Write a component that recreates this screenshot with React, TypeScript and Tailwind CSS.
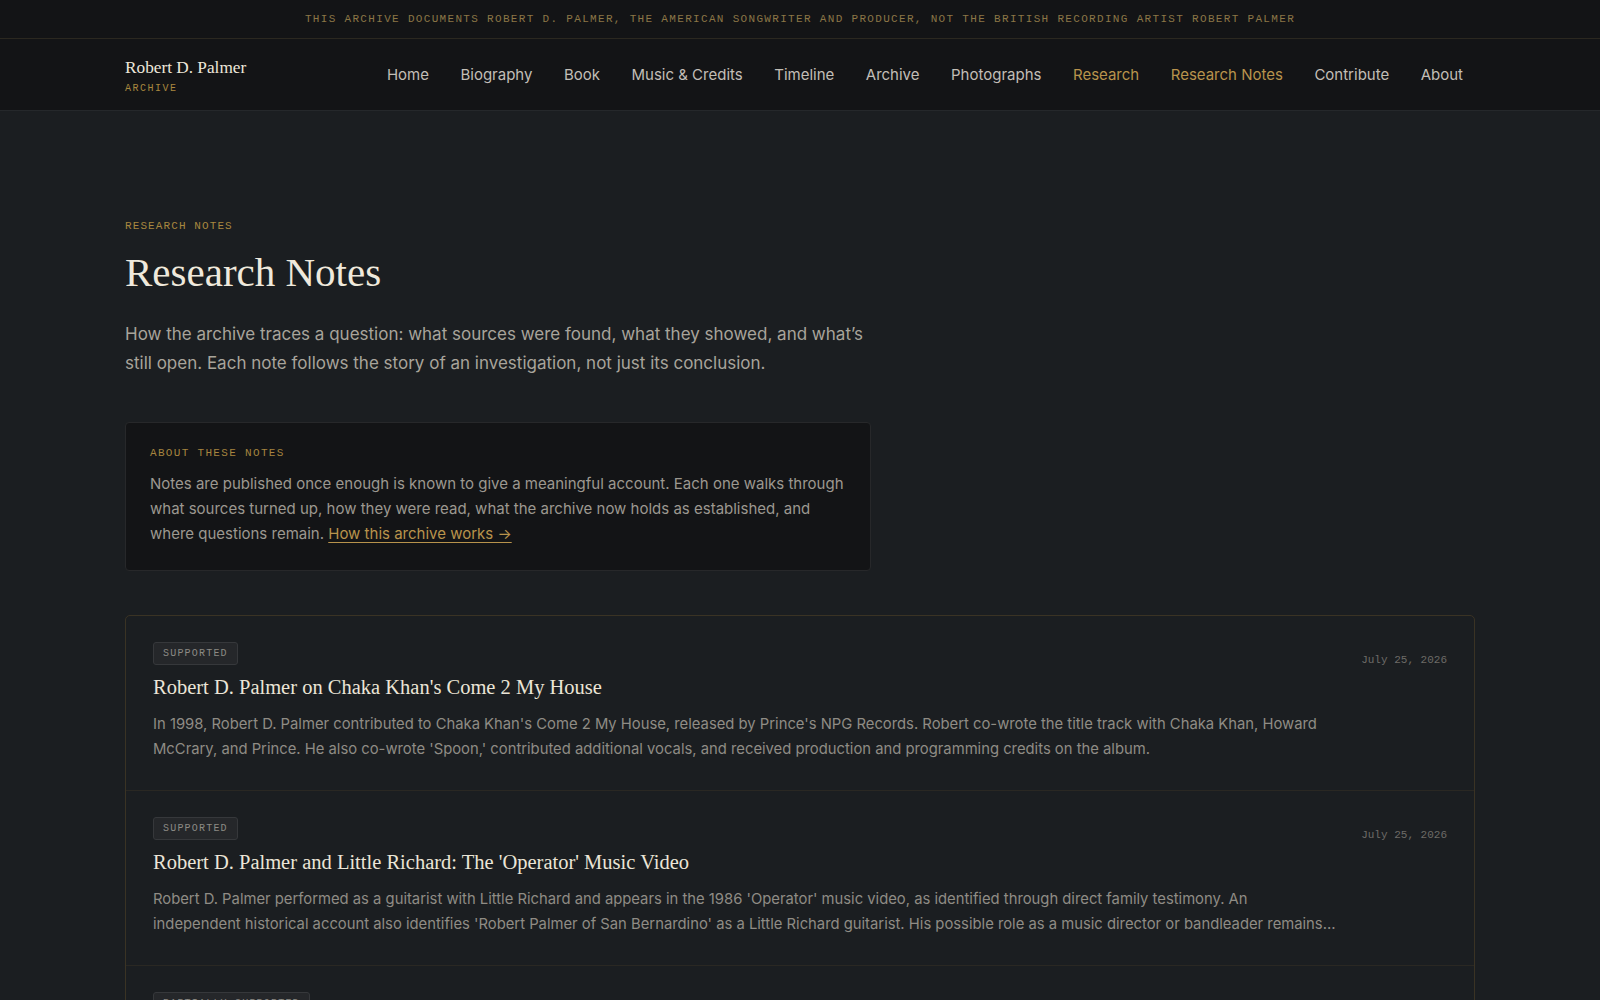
import React from 'react';

type Note = {
  status: string;
  title: string;
  summary: string;
  date: string;
};

const serif = "font-['Liberation_Serif','Times_New_Roman',serif]";
const sans = "font-['Inter','Noto_Sans',sans-serif]";
const mono = "font-['Liberation_Mono','DejaVu_Sans_Mono',monospace]";

const navLinks = [
  { label: 'Home' },
  { label: 'Biography' },
  { label: 'Book' },
  { label: 'Music & Credits' },
  { label: 'Timeline' },
  { label: 'Archive' },
  { label: 'Photographs' },
  { label: 'Research', active: true },
  { label: 'Research Notes', active: true },
  { label: 'Contribute' },
  { label: 'About' },
];

const notes: Note[] = [
  {
    status: 'Supported',
    title: "Robert D. Palmer on Chaka Khan's Come 2 My House",
    summary:
      "In 1998, Robert D. Palmer contributed to Chaka Khan's Come 2 My House, released by Prince's NPG Records. Robert co-wrote the title track with Chaka Khan, Howard McCrary, and Prince. He also co-wrote 'Spoon,' contributed additional vocals, and received production and programming credits on the album.",
    date: 'July 25, 2026',
  },
  {
    status: 'Supported',
    title: "Robert D. Palmer and Little Richard: The 'Operator' Music Video",
    summary:
      "Robert D. Palmer performed as a guitarist with Little Richard and appears in the 1986 'Operator' music video, as identified through direct family testimony. An independent\u00A0historical account also identifies 'Robert Palmer of San Bernardino' as a Little Richard guitarist. His possible role as a music director or bandleader remains unconfirmed and is still being researched.",
    date: 'July 25, 2026',
  },
  {
    status: 'Partially Supported',
    title: 'Robert D. Palmer in the Studio: Engineering and Programming Credits',
    summary:
      'Album liner notes and session paperwork place Robert D. Palmer behind the console on several recordings. Some credits are confirmed by multiple sources, while others rest on a single document and are still being checked.',
    date: 'July 25, 2026',
  },
];

function NoteRow({ note, last }: { note: Note; last: boolean }) {
  return (
    <div className={`flex items-start gap-3 px-[27px] pt-[26px] pb-[29px] ${last ? '' : 'border-b border-[#2a2823]'}`}>
      <div className="min-w-0 flex-1">
        <div className="flex">
          <span className={`${mono} rounded-[3px] border border-[#36383b] bg-[#25272a] px-[9px] py-[3px] text-[10px] uppercase leading-[15px] tracking-[0.12em] text-[#8c8a85]`}>
            {note.status}
          </span>
        </div>
        <h2 className={`${serif} mt-2 text-[20.5px] leading-[28px] text-[#ebe5d7]`}>{note.title}</h2>
        <p className={`${sans} mt-[11px] line-clamp-2 max-w-[1190px] text-[14.8px] leading-[24.5px] text-[#8f8c85]`}>
          {note.summary}
        </p>
      </div>
      <div className={`${mono} shrink-0 pt-[10px] text-[11px] leading-4 text-[#6d6b67]`}>{note.date}</div>
    </div>
  );
}

export default function App() {
  return (
    <div className={`${sans} min-h-screen bg-[#1b1e21]`}>
      {/* disambiguation banner */}
      <div className="flex h-[39px] items-center justify-center border-b border-[#2b2820] bg-[#131416]">
        <p className={`${mono} text-[11px] uppercase tracking-[0.12em] text-[#8b7646]`}>
          This archive documents Robert D. Palmer, the American songwriter and producer, not the British recording artist Robert Palmer
        </p>
      </div>

      <header className="border-b border-[#25282b] bg-[#131416]">
        <div className="mx-auto flex h-[71px] max-w-[1350px] items-center justify-between">
          <div className="flex flex-col pt-[3px]">
            <span className={`${serif} text-[17.25px] leading-[22px] text-[#ede7da]`}>Robert D. Palmer</span>
            <span className={`${mono} mt-[3px] text-[10px] uppercase leading-[14px] tracking-[0.15em] text-[#a8873f]`}>Archive</span>
          </div>
          <nav className="flex items-center gap-[7.5px]">
            {navLinks.map((l) => (
              <a
                key={l.label}
                className={`px-3 text-[15px] leading-5 ${l.active ? 'text-[#b8934c]' : 'text-[#c2beb6]'}`}
              >
                {l.label}
              </a>
            ))}
          </nav>
        </div>
      </header>

      <main className="mx-auto max-w-[1350px] pt-[107px] pb-24">
        <div className="max-w-[746px]">
          <p className={`${mono} text-[11px] uppercase leading-4 tracking-[0.1em] text-[#a8873f]`}>Research Notes</p>
          <h1 className={`${serif} mt-[13px] text-[41px] leading-[50px] text-[#efe9dc]`}>Research Notes</h1>
          <p className="mt-[23px] text-[17px] leading-[28.5px] text-[#a8a49b]">
            How the archive traces a question: what sources were found, what they showed, and what’s still open. Each note
            follows the story of an investigation, not just its conclusion.
          </p>

          <section className="mt-[45px] rounded-[4px] border border-[#27282a] bg-[#131416] px-6 pt-[22px] pb-6">
            <p className={`${mono} text-[11px] uppercase leading-4 tracking-[0.12em] text-[#a6843f]`}>About these notes</p>
            <p className="mt-[10px] text-[15px] leading-[25px] text-[#9c9890]">
              Notes are published once enough is known to give a meaningful account. Each one walks through what sources
              turned up, how they were read, what the archive now holds as established, and where questions remain.{' '}
              <a className="text-[#b8934c] underline underline-offset-[3px]">How this archive works →</a>
            </p>
          </section>
        </div>

        <div className="mt-[44px] rounded-[5px] border border-[#3a3324]">
          {notes.map((n, i) => (
            <NoteRow key={n.title} note={n} last={i === notes.length - 1} />
          ))}
        </div>
      </main>
    </div>
  );
}
